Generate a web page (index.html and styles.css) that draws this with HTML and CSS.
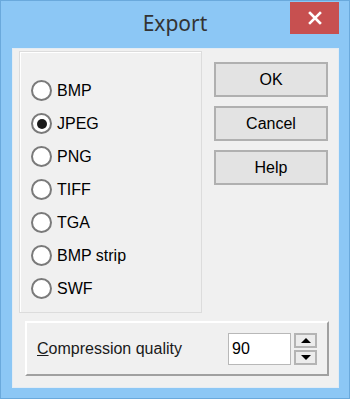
FILE: index.html
```html
<!DOCTYPE html>
<html lang="en">
<head>
    <meta charset="UTF-8">
    <meta name="viewport" content="width=device-width, initial-scale=1.0">
    <title>Export</title>
    <link rel="stylesheet" href="styles.css">
</head>
<body>
    <div class="window">
        <div class="titlebar">
            <span class="title">Export</span>
            <button class="close-btn" aria-label="Close">
                <svg width="14" height="14" viewBox="0 0 14 14">
                    <path d="M2 2 L12 12 M12 2 L2 12" stroke="#fff" stroke-width="2.6" stroke-linecap="square"/>
                </svg>
            </button>
        </div>

        <div class="client">
            <div class="top-row">
                <div class="format-group">
                    <label class="radio-row"><span class="radio"></span>BMP</label>
                    <label class="radio-row"><span class="radio checked"></span>JPEG</label>
                    <label class="radio-row"><span class="radio"></span>PNG</label>
                    <label class="radio-row"><span class="radio"></span>TIFF</label>
                    <label class="radio-row"><span class="radio"></span>TGA</label>
                    <label class="radio-row"><span class="radio"></span>BMP strip</label>
                    <label class="radio-row"><span class="radio"></span>SWF</label>
                </div>

                <div class="buttons">
                    <button class="dlg-btn">OK</button>
                    <button class="dlg-btn">Cancel</button>
                    <button class="dlg-btn">Help</button>
                </div>
            </div>

            <div class="quality-panel">
                <span class="quality-label"><u>C</u>ompression quality</span>
                <div class="spin-edit">90</div>
                <div class="spin-buttons">
                    <span class="spin-btn"><span class="arrow-up"></span></span>
                    <span class="spin-btn"><span class="arrow-down"></span></span>
                </div>
            </div>
        </div>
    </div>
</body>
</html>
```

FILE: styles.css
```css
* {
    margin: 0;
    padding: 0;
    box-sizing: border-box;
}

body {
    background-color: #8cc7f5;
    font-family: 'Liberation Sans', Arial, sans-serif;
}

.window {
    width: 350px;
    height: 399px;
    background-color: #8cc7f5;
    border: 1px solid #6aa9dc;
    display: flex;
    flex-direction: column;
}

.titlebar {
    height: 47px;
    display: grid;
    grid-template-columns: 1fr auto 1fr;
    align-items: start;
}

.title {
    grid-column: 2;
    font-family: 'Noto Sans', 'Open Sans', sans-serif;
    font-size: 21px;
    color: #333;
    margin-top: 8px;
}

.close-btn {
    grid-column: 3;
    justify-self: end;
    width: 49px;
    height: 32px;
    margin-right: 10px;
    margin-top: 1px;
    background-color: #c75050;
    border: none;
    display: flex;
    align-items: center;
    justify-content: center;
}

.client {
    margin: 0 10px 10px 11px;
    flex: 1;
    background-color: #f0f0f0;
    border: 1px solid #e3ecf4;
    padding: 2px 9px 11px 6px;
    display: flex;
    flex-direction: column;
}

.top-row {
    display: flex;
}

.format-group {
    width: 183px;
    height: 262px;
    border: 1px solid #dcdcdc;
    box-shadow: inset 1px 1px 0 #fff;
    padding: 22px 0 0 11px;
    display: flex;
    flex-direction: column;
}

.radio-row {
    height: 33px;
    display: flex;
    align-items: center;
    gap: 5px;
    font-size: 16px;
    color: #000;
}

.radio {
    width: 21px;
    height: 21px;
    border: 2px solid #7a7a7a;
    border-radius: 50%;
    background-color: #fff;
    display: flex;
    align-items: center;
    justify-content: center;
}

.radio.checked::after {
    content: "";
    width: 10px;
    height: 10px;
    border-radius: 50%;
    background-color: #1a1a1a;
}

.buttons {
    margin-left: 12px;
    margin-top: 11px;
    display: flex;
    flex-direction: column;
    gap: 9px;
}

.dlg-btn {
    width: 114px;
    height: 35px;
    background-color: #e3e3e3;
    border: 2px solid #b0b0b0;
    font-family: 'Liberation Sans', Arial, sans-serif;
    font-size: 16px;
    color: #000;
}

.quality-panel {
    margin: 8px 0 0 6px;
    height: 55px;
    border-top: 2px solid #fff;
    border-left: 2px solid #fff;
    border-right: 2px solid #a0a0a0;
    border-bottom: 2px solid #a0a0a0;
    padding: 0 10px 0 10px;
    display: flex;
    align-items: center;
}

.quality-label {
    font-size: 16px;
    color: #1a1a1a;
}

.spin-edit {
    margin-left: auto;
    width: 63px;
    height: 32px;
    background-color: #fff;
    border: 1px solid #b8b8b8;
    font-size: 16px;
    padding: 6px 0 0 3px;
}

.spin-buttons {
    margin-left: 3px;
    display: flex;
    flex-direction: column;
    gap: 2px;
}

.spin-btn {
    width: 23px;
    height: 15px;
    border: 2px solid #b4b4b4;
    background-color: #ececec;
    display: flex;
    align-items: center;
    justify-content: center;
}

.arrow-up {
    border-left: 5px solid transparent;
    border-right: 5px solid transparent;
    border-bottom: 5px solid #000;
}

.arrow-down {
    border-left: 5px solid transparent;
    border-right: 5px solid transparent;
    border-top: 5px solid #000;
}
```
